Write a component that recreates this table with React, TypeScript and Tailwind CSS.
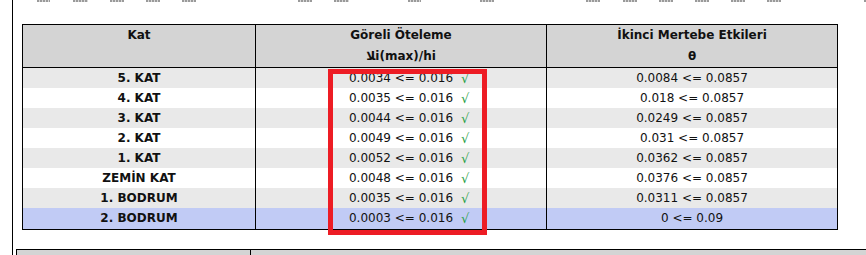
import React from "react";

const rows = [
  { kat: "5. KAT", g: "0.0034 <= 0.016", t: "0.0084 <= 0.0857", bg: "bg-[#e9e9e9]" },
  { kat: "4. KAT", g: "0.0035 <= 0.016", t: "0.018 <= 0.0857", bg: "bg-white" },
  { kat: "3. KAT", g: "0.0044 <= 0.016", t: "0.0249 <= 0.0857", bg: "bg-[#e9e9e9]" },
  { kat: "2. KAT", g: "0.0049 <= 0.016", t: "0.031 <= 0.0857", bg: "bg-white" },
  { kat: "1. KAT", g: "0.0052 <= 0.016", t: "0.0362 <= 0.0857", bg: "bg-[#e9e9e9]" },
  { kat: "ZEMİN KAT", g: "0.0048 <= 0.016", t: "0.0376 <= 0.0857", bg: "bg-white" },
  { kat: "1. BODRUM", g: "0.0035 <= 0.016", t: "0.0311 <= 0.0857", bg: "bg-[#e9e9e9]" },
  { kat: "2. BODRUM", g: "0.0003 <= 0.016", t: "0 <= 0.09", bg: "bg-[#c1cbf5]" },
];

const marks = [
  [37, 13], [73, 15], [110, 14], [146, 14], [182, 14], [298, 14], [334, 15], [408, 13],
  [480, 14], [586, 14], [623, 14], [659, 14], [695, 14], [731, 14], [767, 14], [864, 2],
];

export default function App() {
  return (
    <div
      className="relative w-[866px] h-[255px] overflow-hidden bg-white text-[12px] text-[#111]"
      style={{ fontFamily: '"DejaVu Sans", Verdana, sans-serif' }}
    >
      <div className="ml-[12px] border-l border-black h-[255px] flex flex-col">
        {/* cut-off text remnants at top */}
        <div className="h-[24px] relative">
          <div className="flex">
            {marks.map(([x, w], i) => (
              <div
                key={i}
                className="h-[2px] bg-[repeating-linear-gradient(90deg,#9a9a9a_0_2px,#d8d8d8_2px_3px)]"
                style={{ width: w, marginLeft: i === 0 ? x - 13 : x - (marks[i - 1][0] + marks[i - 1][1]) }}
              />
            ))}
          </div>
        </div>

        {/* main table */}
        <div className="relative ml-[9px] w-[816px] border border-black">
          <div className="grid grid-cols-[233px_291px_290px] bg-[#d4d4d4] border-b border-black font-bold leading-[21px] h-[43px]">
            <div className="border-r border-black text-center">Kat</div>
            <div className="border-r border-black text-center flex flex-col">
              <span>Göreli Öteleme</span>
              <span>ﻼi(max)/hi</span>
            </div>
            <div className="text-center flex flex-col">
              <span>İkinci Mertebe Etkileri</span>
              <span>θ</span>
            </div>
          </div>
          {rows.map((r, i) => (
            <div
              key={i}
              className={`grid grid-cols-[233px_291px_290px] ${i === rows.length - 1 ? "h-[21px]" : "h-[20px]"} leading-[21px] ${r.bg}`}
            >
              <div className="border-r border-black text-center font-bold">{r.kat}</div>
              <div className="border-r border-black grid grid-cols-[1fr_auto_1fr]">
                <span />
                <span>{r.g}</span>
                <span className="pl-[8px] text-[#28a046] text-[13px]">√</span>
              </div>
              <div className="text-center">{r.t}</div>
            </div>
          ))}
          {/* red highlight annotation */}
          <div className="absolute left-[305px] top-[44px] w-[159px] h-[166px] border-[5px] border-[#ed1c24] pointer-events-none" />
        </div>

        {/* next table start */}
        <div className="mt-[19px] ml-[3px] flex-1 border-t border-l border-black bg-[#d4d4d4] grid grid-cols-[234px_1fr]">
          <div className="border-r border-black" />
          <div />
        </div>
      </div>
    </div>
  );
}
